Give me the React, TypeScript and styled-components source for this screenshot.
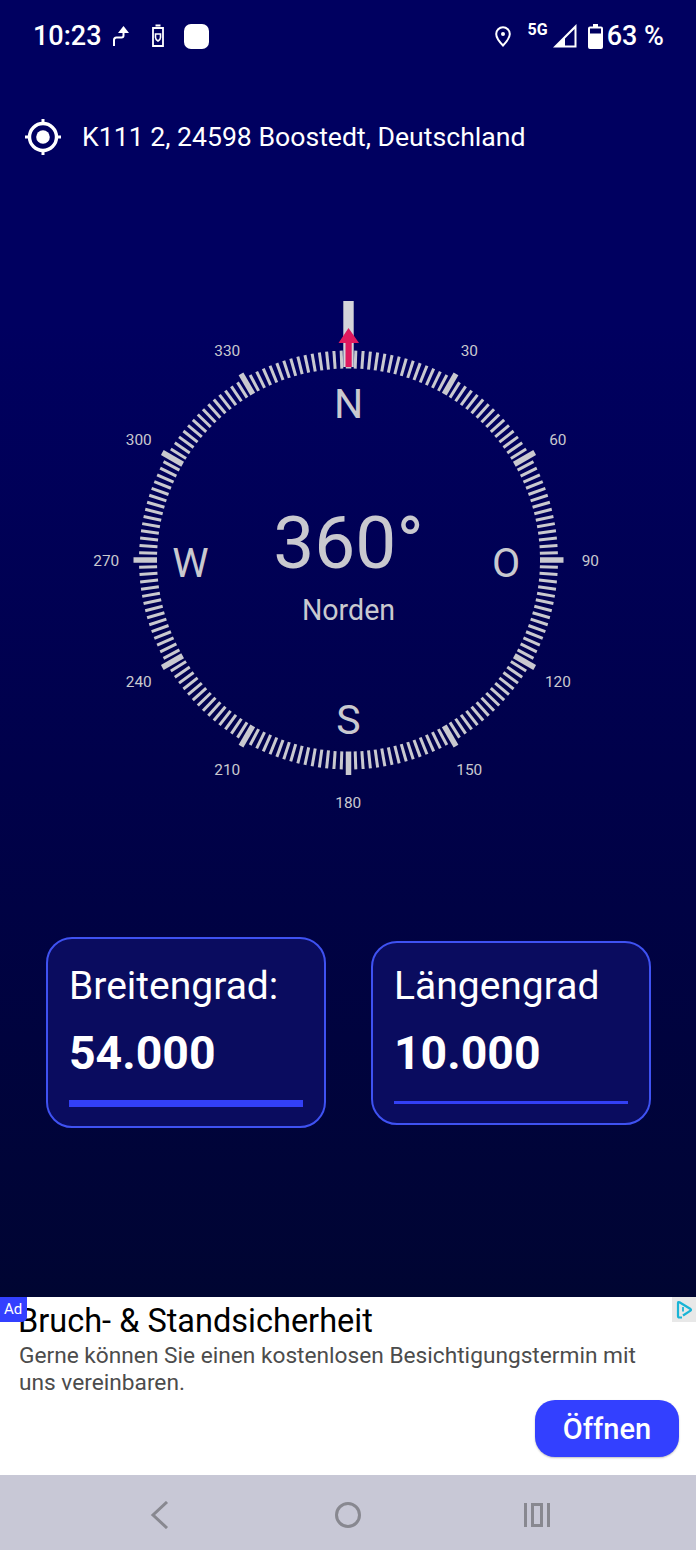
import React from 'react'
import styled, { createGlobalStyle } from 'styled-components'

const GlobalStyle = createGlobalStyle`
    html, body {
        margin: 0;
        padding: 0;
    }
    body {
        font-family: Roboto, "Liberation Sans", sans-serif;
        background: #000060;
    }
    * {
        box-sizing: border-box;
    }
`

const Screen = styled.div`
    width: 696px;
    height: 1550px;
    display: flex;
    flex-direction: column;
    overflow: hidden;
`

const Main = styled.main`
    flex: 1;
    display: flex;
    flex-direction: column;
    background: linear-gradient(180deg, #000060 0%, #000060 25%, #00014a 60%, #000532 100%);
    color: #fff;
`

const StatusBar = styled.div`
    height: 72px;
    display: flex;
    align-items: center;
    justify-content: space-between;
    padding: 0 32px 0 33px;
`

const StatusGroup = styled.div`
    display: flex;
    align-items: center;
`

const StatusText = styled.span`
    font-size: 27px;
    font-weight: 500;
    line-height: 32px;
`

const Percent = styled(StatusText)`
    margin-left: 4px;
`

const FiveG = styled.span`
    font-size: 16px;
    font-weight: 700;
    line-height: 16px;
    margin: -13px 5px 0 16.7px;
`

const AppIcon = styled.div`
    width: 25px;
    height: 25px;
    border-radius: 7px;
    background: #fff;
    margin-left: 19px;
`

const AddressRow = styled.div`
    height: 40px;
    margin-top: 45px;
    display: flex;
    align-items: center;
    gap: 20px;
    padding-left: 24px;
    font-size: 26.64px;
`

const Dial = styled.div`
    position: relative;
    height: 520px;
    margin-top: 138px;
`

const DialSvg = styled.svg`
    display: block;
`

const Readout = styled.div`
    position: absolute;
    left: 1px;
    right: 0;
    top: 206px;
    display: flex;
    flex-direction: column;
    align-items: center;
    color: #c9c9cf;
`

const Degrees = styled.div`
    font-size: 73px;
    line-height: 84px;
`

const Direction = styled.div`
    font-size: 28.6px;
    line-height: 32px;
    margin-top: 9px;
`

const Cards = styled.div`
    display: flex;
    align-items: center;
    justify-content: space-between;
    padding: 0 45px 0 46px;
    margin-top: 122px;
`

const Card = styled.div<{ $raised: boolean }>`
    width: 280px;
    height: ${props => (props.$raised ? '191px' : '184px')};
    padding: ${props => (props.$raised ? '26px' : '22px')} 21px 0;
    border: 2px solid #3f52f2;
    border-radius: 26px;
    background: #0a0c5f;
`

const CardTitle = styled.div`
    font-size: 39px;
    line-height: 42px;
`

const CardValue = styled.div`
    font-size: 46.4px;
    font-weight: 700;
    line-height: 56px;
    margin-top: 18px;
`

const CardBar = styled.div<{ $thick: number }>`
    height: ${props => props.$thick}px;
    background: #3340f5;
    margin-top: ${props => (props.$thick > 4 ? '19px' : '20px')};
`

const Ad = styled.section`
    position: relative;
    height: 178px;
    background: #fff;
    padding: 6px 17px 0 18px;
    display: flex;
    flex-direction: column;
`

const AdBadge = styled.div`
    position: absolute;
    left: 0;
    top: 0;
    width: 27px;
    height: 25px;
    background: #3340ff;
    border-bottom-right-radius: 5px;
    color: #fff;
    font-size: 15px;
    line-height: 25px;
    padding-left: 4px;
`

const AdChoices = styled.div`
    position: absolute;
    right: 0;
    top: 0;
    width: 24px;
    height: 25px;
    background: #e8e8e8;
    display: flex;
    align-items: center;
    justify-content: center;
`

const AdTitle = styled.div`
    font-size: 32.5px;
    line-height: 37px;
    color: #000;
`

const AdText = styled.div`
    font-size: 22.7px;
    line-height: 27px;
    color: #4c4c4c;
    margin: 2px 0 0 1px;
    max-width: 630px;
`

const OpenButton = styled.button`
    align-self: flex-end;
    width: 144px;
    height: 57px;
    margin-top: 4px;
    border: none;
    border-radius: 20px;
    background: #3340ff;
    color: #fff;
    font-family: inherit;
    font-size: 29px;
    font-weight: 500;
    box-shadow: 0 1px 2px rgba(0, 0, 0, 0.25);
`

const NavBar = styled.nav`
    height: 75px;
    padding-top: 4px;
    background: #c8c8d6;
    display: flex;
    align-items: center;
    justify-content: center;
    gap: 161px;
`

const CX = 348.5
const CY = 265
const ink = '#c9c9cf'

const polar = (deg: number, r: number) => {
    const a = (deg * Math.PI) / 180
    return { x: CX + r * Math.sin(a), y: CY - r * Math.cos(a) }
}

const ticks = Array.from({ length: 180 }, (_, i) => i * 2)
const degreeLabels = [30, 60, 90, 120, 150, 180, 210, 240, 270, 300, 330]
const cardinals = [
    { label: 'N', x: CX, y: 109 },
    { label: 'O', x: 506, y: 268 },
    { label: 'S', x: CX, y: 425 },
    { label: 'W', x: 190.5, y: 268 },
]

const Compass = (): JSX.Element => (
    <DialSvg width={696} height={520} viewBox="0 0 696 520">
        {ticks.map(deg => {
            const major = deg % 30 === 0
            const from = polar(deg, 191.5)
            const to = polar(deg, major ? 215 : 209.5)
            return (
                <line
                    key={deg}
                    x1={from.x}
                    y1={from.y}
                    x2={to.x}
                    y2={to.y}
                    stroke={ink}
                    strokeWidth={major ? 5.5 : 3}
                />
            )
        })}
        {degreeLabels.map(deg => {
            const p = polar(deg, 242)
            return (
                <text key={deg} x={p.x - 0.2} y={p.y + 5.6} fill={ink} fontSize="15.4" textAnchor="middle">
                    {deg}
                </text>
            )
        })}
        {cardinals.map(c => (
            <text key={c.label} x={c.x} y={c.y} fill={ink} fontSize="41" textAnchor="middle" dominantBaseline="central">
                {c.label}
            </text>
        ))}
        <rect x="343.3" y="6" width="10.4" height="66" fill="#d4d4da" />
        <path d="M348.5 33 L359 48 L351.7 48 L351.7 72 L345.5 72 L345.5 48 L338.5 48 Z" fill="#e0195f" />
    </DialSvg>
)

const App = (): JSX.Element => (
    <Screen>
        <GlobalStyle />
        <Main>
            <StatusBar>
                <StatusGroup>
                    <StatusText>10:23</StatusText>
                    <svg width="18" height="22" viewBox="0 0 18 22" style={{ marginLeft: 10 }}>
                        <path d="M2 21 V15 Q2 12.5 4.5 12.5 H9.5 Q11.5 12.5 11.5 10.5 V7" fill="none" stroke="#fff" strokeWidth="2" />
                        <path d="M11.5 1 L17 8 H6 Z" fill="#fff" />
                    </svg>
                    <svg width="14" height="24" viewBox="0 0 14 24" style={{ marginLeft: 21 }}>
                        <path d="M4.5 1.5 H9.5 M2 4 H12 V22 H2 Z" fill="none" stroke="#fff" strokeWidth="1.8" />
                        <path d="M4.5 10 H9.5 V13.5 Q9.5 15.5 7 17 Q4.5 15.5 4.5 13.5 Z" fill="none" stroke="#fff" strokeWidth="1.6" />
                    </svg>
                    <AppIcon />
                </StatusGroup>
                <StatusGroup>
                    <svg width="16" height="21" viewBox="0 0 16 21">
                        <path d="M8 19.5 Q1.2 12.5 1.2 8 A6.8 6.8 0 0 1 14.8 8 Q14.8 12.5 8 19.5 Z" fill="none" stroke="#fff" strokeWidth="2" />
                        <circle cx="8" cy="8" r="2" fill="#fff" />
                    </svg>
                    <FiveG>5G</FiveG>
                    <svg width="24" height="24" viewBox="0 0 24 24">
                        <path d="M0 23.5 L23.5 0 V23.5 Z M21.5 5 L12 14.5 V21.5 H21.5 Z" fill="#fff" fillRule="evenodd" />
                    </svg>
                    <svg width="15" height="25" viewBox="0 0 15 25" style={{ marginLeft: 11 }}>
                        <path d="M5 0 H10 V2.5 H13 Q15 2.5 15 4.5 V23 Q15 25 13 25 H2 Q0 25 0 23 V4.5 Q0 2.5 2 2.5 H5 Z" fill="#fff" />
                        <rect x="2" y="4.5" width="11" height="5" fill="#000060" />
                    </svg>
                    <Percent>63 %</Percent>
                </StatusGroup>
            </StatusBar>
            <AddressRow>
                <svg width="38" height="38" viewBox="0 0 38 38">
                    <circle cx="19" cy="19" r="13.5" fill="none" stroke="#fff" strokeWidth="3.4" />
                    <circle cx="19" cy="19" r="6.8" fill="#fff" />
                    <path d="M19 1 V6 M19 32 V37 M1 19 H6 M32 19 H37" stroke="#fff" strokeWidth="3" />
                </svg>
                K111 2, 24598 Boostedt, Deutschland
            </AddressRow>
            <Dial>
                <Compass />
                <Readout>
                    <Degrees>360°</Degrees>
                    <Direction>Norden</Direction>
                </Readout>
            </Dial>
            <Cards>
                <Card $raised>
                    <CardTitle>Breitengrad:</CardTitle>
                    <CardValue>54.000</CardValue>
                    <CardBar $thick={7} />
                </Card>
                <Card $raised={false}>
                    <CardTitle>Längengrad</CardTitle>
                    <CardValue>10.000</CardValue>
                    <CardBar $thick={3} />
                </Card>
            </Cards>
        </Main>
        <Ad>
            <AdBadge>Ad</AdBadge>
            <AdChoices>
                <svg width="18" height="20" viewBox="0 0 18 20">
                    <path d="M3 3 Q3 1.5 4.5 2.3 L15.5 9 Q16.5 9.8 15.5 10.6 L8 15.5 M3 3 V16 Q3 17.5 4.5 17.5 H7" fill="none" stroke="#19b4d6" strokeWidth="2.2" />
                    <path d="M8 7 V11.5" fill="none" stroke="#19b4d6" strokeWidth="1.8" />
                </svg>
            </AdChoices>
            <AdTitle>Bruch- &amp; Standsicherheit</AdTitle>
            <AdText>Gerne können Sie einen kostenlosen Besichtigungstermin mit uns vereinbaren.</AdText>
            <OpenButton>Öffnen</OpenButton>
        </Ad>
        <NavBar>
            <svg width="28" height="28" viewBox="0 0 28 28">
                <path d="M22 1 L8 14 L22 27" fill="none" stroke="#888890" strokeWidth="3" />
            </svg>
            <svg width="28" height="28" viewBox="0 0 28 28">
                <circle cx="14" cy="14" r="11.5" fill="none" stroke="#888890" strokeWidth="3" />
            </svg>
            <svg width="28" height="28" viewBox="0 0 28 28">
                <path d="M2.5 2 V26 M25.5 2 V26 M9.5 3.5 H18.5 V24.5 H9.5 Z" fill="none" stroke="#888890" strokeWidth="3" />
            </svg>
        </NavBar>
    </Screen>
)

export default App
